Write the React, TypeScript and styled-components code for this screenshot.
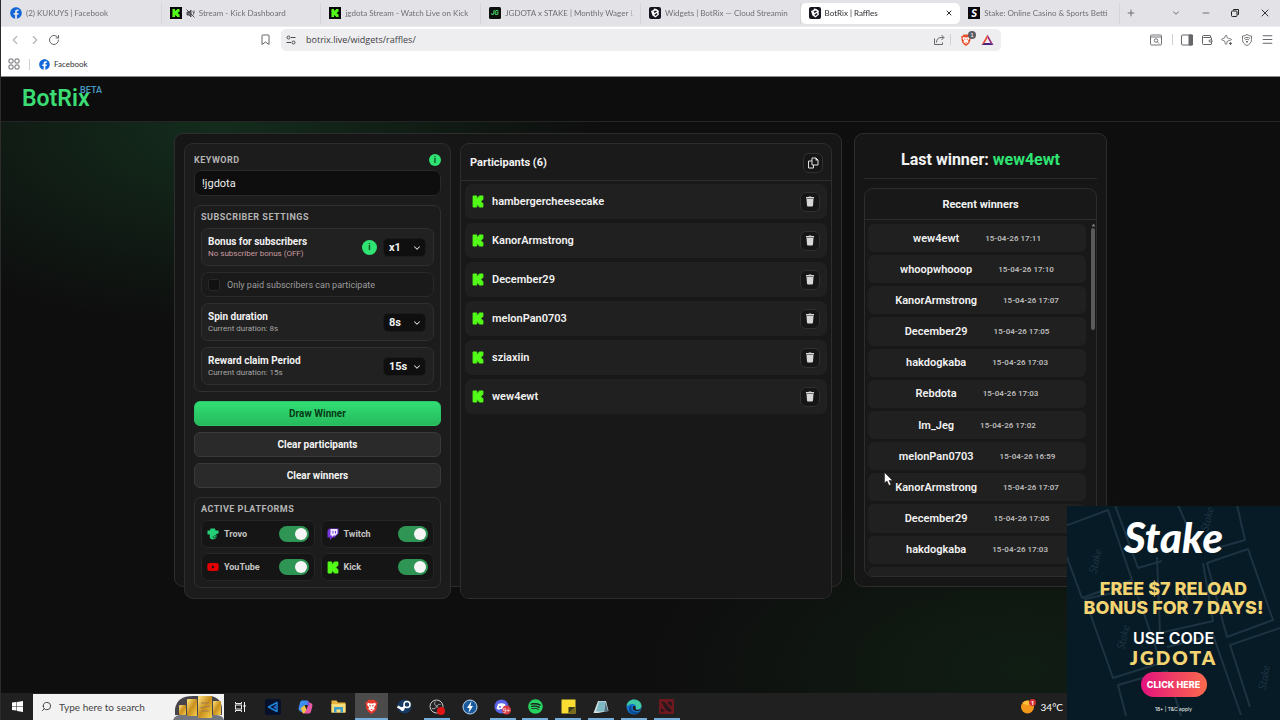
import React from "react";
import styled, { createGlobalStyle, css } from "styled-components";
import {
  ChevronDown,
  ChevronLeft,
  ChevronRight,
  Menu,
  Minus,
  Plus,
  RotateCw,
  Search,
  Wallet,
  X,
} from "lucide-react";
import { FaFacebook, FaSpotify, FaYoutube } from "react-icons/fa";

const roboto = `Roboto, "Liberation Sans", sans-serif`;
const systemFont = `Lato, "Open Sans", sans-serif`;

const GlobalStyle = createGlobalStyle`
  *, *::before, *::after { box-sizing: border-box; }
  body { margin: 0; background: #0d0d0d; font-family: ${roboto}; color: #f2f2f2; }
  h1, h2, h3, p, ul { margin: 0; padding: 0; }
  ul { list-style: none; }
  button, input, select { font: inherit; color: inherit; }
  button { cursor: pointer; padding: 0; border: 0; background: none; }
  svg { display: block; flex: none; }
`;

const Desktop = styled.div`
  display: flex;
  flex-direction: column;
  min-height: 100vh;
  overflow: hidden;
  border-left: 1px solid #2c2c2c;
`;

/* ---------- browser chrome ---------- */

const Chrome = styled.header`
  font-family: ${systemFont};
  font-size: 8px;
  line-height: 12px;
  color: #3d3d42;
  background: #fff;
  border-bottom: 1px solid #8c8c8c;
`;

const TabStrip = styled.nav`
  display: flex;
  align-items: center;
  height: 27px;
  padding-left: 1px;
  background: #e3e3e7;
  border-bottom: 1px solid #ececef;
`;

const TabList = styled.div`
  display: flex;
  flex: 1;
  min-width: 0;
`;

const Tab = styled.a<{ $active?: boolean }>`
  display: flex;
  flex: 1 1 0;
  align-items: center;
  gap: 4px;
  min-width: 0;
  height: 21px;
  padding: 0 7px 0 8px;
  text-decoration: none;
  color: ${(p) => (p.$active ? "#2f2f34" : "#6e6e75")};
  background: ${(p) => (p.$active ? "#fff" : "transparent")};
  border-radius: ${(p) => (p.$active ? "5px" : "0")};
  box-shadow: ${(p) => (p.$active ? "none" : "inset -1px 0 0 #d5d5da")};
`;

const TabTitle = styled.span`
  flex: 1;
  min-width: 0;
  overflow: hidden;
  white-space: nowrap;
  mask-image: linear-gradient(to right, #000 calc(100% - 6px), transparent);
`;

const WindowControls = styled.div`
  display: flex;
  align-items: center;
  justify-content: space-between;
  width: 160px;
  padding: 0 9px 0 6px;
  color: #55555b;
`;

const ControlGroup = styled.div`
  display: flex;
  align-items: center;
  gap: 20px;
`;

const IconButton = styled.button`
  display: flex;
  align-items: center;
  justify-content: center;
  color: inherit;
`;

const Toolbar = styled.div`
  display: flex;
  align-items: center;
  height: 25px;
  padding: 0 6px 0 7px;
  color: #66666b;
`;

const ToolbarIcons = styled.div<{ $gap: number; $end?: boolean }>`
  display: flex;
  align-items: center;
  gap: ${(p) => p.$gap}px;
  margin-left: ${(p) => (p.$end ? "auto" : "0")};
`;

const AddressArea = styled.div`
  display: flex;
  align-items: center;
  gap: 11px;
  width: 740px;
  margin-left: 201px;
`;

const AddressBar = styled.form`
  display: flex;
  flex: 1;
  align-items: center;
  gap: 10px;
  height: 22px;
  padding: 0 7px 0 5px;
  background: #eeeef1;
  border-radius: 5px;
`;

const AddressInput = styled.input`
  flex: 1;
  min-width: 0;
  padding: 0;
  border: 0;
  outline: 0;
  background: none;
  font-family: "Open Sans", sans-serif;
  font-size: 9px;
  color: #3d3d42;
`;

const Divider = styled.span`
  width: 1px;
  height: 11px;
  background: #cfcfd4;
`;

const ShieldWrap = styled.span`
  position: relative;
`;

const ShieldCount = styled.span`
  position: absolute;
  top: -3px;
  right: -4px;
  width: 8px;
  height: 8px;
  border-radius: 4px;
  background: #5b5b63;
  color: #fff;
  font-size: 6px;
  line-height: 8px;
  text-align: center;
`;

const BookmarkBar = styled.nav`
  display: flex;
  align-items: center;
  gap: 9px;
  height: 24px;
  padding: 0 7px;
`;

const Bookmark = styled.a`
  display: flex;
  align-items: center;
  gap: 4px;
  color: #2f2f34;
  text-decoration: none;
`;

/* ---------- site ---------- */

const Site = styled.div`
  display: flex;
  flex: 1;
  flex-direction: column;
  background:
    radial-gradient(ellipse 380px 200px at 17% 8%, rgba(28, 90, 50, 0.4), transparent),
    radial-gradient(ellipse 380px 180px at 80% 96%, rgba(22, 70, 34, 0.28), transparent),
    #0e0e0e;
`;

const SiteHeader = styled.header`
  display: flex;
  align-items: center;
  height: 45px;
  padding-left: 21px;
  background: #0d0d0d;
  border-bottom: 1px solid #242424;
`;

const Brand = styled.a`
  position: relative;
  color: #3bdc73;
  font-size: 23px;
  line-height: 28px;
  font-weight: 600;
  text-decoration: none;
`;

const BetaTag = styled.sup`
  position: absolute;
  left: 58px;
  top: -1px;
  color: #4795bd;
  font-size: 9px;
  line-height: 12px;
`;

const Content = styled.main`
  display: grid;
  grid-template-columns: minmax(0, 668fr) minmax(0, 253fr);
  gap: 12px;
  width: 72%;
  min-width: 933px;
  margin: 11px auto 0;
`;

const surface = css`
  border: 1px solid #2d2d2d;
  border-radius: 9px;
`;

const RafflePanel = styled.section`
  ${surface}
  display: grid;
  grid-template-columns: 267px minmax(0, 1fr);
  gap: 9px;
  padding: 9px 9px 0;
  background: #161616;
`;

const Column = styled.div`
  ${surface}
  display: flex;
  flex-direction: column;
  margin-bottom: -13px;
  background: #1a1a1a;
`;

const ControlsColumn = styled(Column)`
  gap: 9px;
  padding: 9px 9px 10px;
  background: #1c1c1c;
`;

const Field = styled.div`
  display: flex;
  flex-direction: column;
  gap: 4px;
`;

const FieldHead = styled.div`
  display: flex;
  align-items: center;
  justify-content: space-between;
  height: 13px;
`;

const capsLabel = css`
  color: #b4b4b4;
  font-size: 9px;
  line-height: 12px;
  font-weight: 700;
  letter-spacing: 0.5px;
  text-transform: uppercase;
`;

const CapsLabel = styled.label`
  ${capsLabel}
`;

const InfoDot = styled.button<{ $size: number }>`
  width: ${(p) => p.$size}px;
  height: ${(p) => p.$size}px;
  border-radius: 50%;
  background: #2fe472;
  color: #0c4a22;
  font-size: 9px;
  line-height: ${(p) => p.$size}px;
  font-weight: 700;
  text-align: center;
`;

const KeywordInput = styled.input`
  width: 100%;
  height: 26px;
  padding: 0 7px;
  border: 1px solid #292929;
  border-radius: 7px;
  outline: 0;
  background: #0e0e0e;
  color: #ededed;
  font-size: 11px;
`;

const Group = styled.section`
  display: flex;
  flex-direction: column;
  gap: 5px;
  padding: 5px 6px 6px;
  border: 1px solid #303030;
  border-radius: 7px;
`;

const GroupTitle = styled.h2`
  ${capsLabel}
`;

const Settings = styled.div`
  display: flex;
  flex-direction: column;
  gap: 6px;
`;

const SettingRow = styled.div`
  display: flex;
  align-items: center;
  gap: 6px;
  height: 38px;
  padding: 0 7px 0 6px;
  border: 1px solid #2f2f2f;
  border-radius: 7px;
  background: #212121;
`;

const SettingText = styled.div`
  flex: 1;
`;

const SettingName = styled.label`
  display: block;
  font-size: 10px;
  line-height: 13px;
  font-weight: 700;
`;

const SettingHint = styled.p<{ $off?: boolean }>`
  font-size: 8px;
  line-height: 12px;
  color: ${(p) => (p.$off ? "#c79a9f" : "#a6a6a6")};
`;

const SelectBox = styled.span`
  position: relative;
  width: 43px;
  height: 19px;

  svg {
    position: absolute;
    top: 5px;
    right: 4px;
    pointer-events: none;
  }
`;

const Select = styled.select`
  display: block;
  appearance: none;
  width: 100%;
  height: 100%;
  padding: 0 0 0 5px;
  border: 1px solid #1b1b1b;
  border-radius: 5px;
  background: #0f0f0f;
  font-size: 11px;
  font-weight: 700;
`;

const CheckRow = styled.label`
  display: flex;
  align-items: center;
  gap: 7px;
  height: 25px;
  padding: 0 6px;
  border: 1px solid #2a2a2a;
  border-radius: 7px;
  background: #1a1a1a;
  color: #9c9c9c;
  font-size: 9px;
`;

const CheckBox = styled.input`
  appearance: none;
  width: 12px;
  height: 12px;
  margin: 0;
  border: 1px solid #272727;
  border-radius: 3px;
  background: #111;
`;

const Actions = styled.div`
  display: flex;
  flex-direction: column;
  gap: 6px;
`;

const ActionButton = styled.button<{ $primary?: boolean }>`
  height: 25px;
  border: 1px solid ${(p) => (p.$primary ? "#2bc666" : "#3a3a3a")};
  border-radius: 6px;
  background: ${(p) => (p.$primary ? "linear-gradient(#31df75, #26b95c)" : "#2a2a2a")};
  color: ${(p) => (p.$primary ? "#063a17" : "#f4f4f4")};
  font-size: 10px;
  font-weight: 700;
`;

const PlatformGrid = styled.div`
  display: grid;
  grid-template-columns: 1fr 1fr;
  gap: 5px 6px;
`;

const PlatformTile = styled.label`
  display: flex;
  align-items: center;
  gap: 5px;
  height: 28px;
  padding: 0 5px;
  border: 1px solid #262626;
  border-radius: 7px;
  background: #151515;
  color: #c4c4c4;
  font-size: 9px;
  font-weight: 700;
`;

const Toggle = styled.input`
  appearance: none;
  display: flex;
  align-items: center;
  justify-content: flex-end;
  width: 30px;
  height: 16px;
  margin: 0 0 0 auto;
  padding: 0 2px;
  border-radius: 8px;
  background: #2f9554;

  &::after {
    content: "";
    width: 12px;
    height: 12px;
    border-radius: 50%;
    background: #f4f4f4;
  }
  &:not(:checked) {
    justify-content: flex-start;
    background: #444;
  }
`;

const ListHead = styled.header`
  display: flex;
  align-items: center;
  justify-content: space-between;
  height: 37px;
  padding: 1px 8px 0 9px;
  border-bottom: 1px solid #2d2d2d;
`;

const ListTitle = styled.h2`
  font-size: 11px;
  line-height: 14px;
  font-weight: 700;
`;

const SquareButton = styled(IconButton)`
  width: 20px;
  height: 20px;
  border: 1px solid #303030;
  border-radius: 6px;
  background: #161616;
  color: #e0e0e0;
`;

const ParticipantList = styled.ul`
  display: flex;
  flex: 1;
  flex-direction: column;
  gap: 4px;
  padding: 3px 4px;
  border-radius: 0 0 8px 8px;
  background: #181818;
`;

const Participant = styled.li`
  display: flex;
  align-items: center;
  gap: 8px;
  height: 35px;
  padding: 0 7px;
  border-radius: 7px;
  background: #202020;
  font-size: 11px;
  font-weight: 600;
`;

const ParticipantName = styled.span`
  flex: 1;
`;

const WinnersPanel = styled.aside`
  ${surface}
  display: flex;
  flex-direction: column;
  gap: 9px;
  padding: 9px;
  background: #161616;
`;

const LastWinner = styled.h1`
  height: 36px;
  padding-top: 7px;
  border-bottom: 1px solid #2a2a2a;
  font-size: 16px;
  line-height: 20px;
  font-weight: 700;
  text-align: center;

  span { color: #2fe472; }
`;

const RecentCard = styled.section`
  ${surface}
  display: flex;
  flex: 1 1 0;
  flex-direction: column;
  min-height: 0;
  background: #181818;
`;

const RecentTitle = styled.h2`
  height: 31px;
  border-bottom: 1px solid #2d2d2d;
  font-size: 11px;
  line-height: 31px;
  font-weight: 700;
  text-align: center;
`;

const RecentBody = styled.div`
  display: flex;
  flex: 1 1 0;
  min-height: 0;
`;

const WinnerList = styled.ul`
  display: grid;
  flex: 1;
  grid-auto-rows: 8%;
  gap: 3px;
  height: 100%;
  padding: 4px 4px 0 3px;
  overflow: hidden;
`;

const Winner = styled.li`
  display: flex;
  align-items: center;
  justify-content: center;
  gap: 26px;
  border-radius: 6px;
  background: #202020;
  font-size: 11px;
  font-weight: 600;

  time {
    color: #bcbcbc;
    font-size: 8px;
  }
`;

const ScrollTrack = styled.div`
  display: flex;
  flex-direction: column;
  align-items: center;
  gap: 1px;
  width: 6px;
  padding-top: 3px;
`;

const ScrollThumb = styled.div`
  width: 4px;
  height: 29%;
  border-radius: 2px;
  background: #5a5a5a;
`;

/* ---------- advertisement ---------- */

const Ad = styled.aside`
  position: fixed;
  right: 0;
  bottom: 0;
  width: 213px;
  height: 214px;
  overflow: hidden;
  background: #071b27;
  font-family: Inter, "Liberation Sans", sans-serif;
  text-align: center;
`;

const AdArt = styled.svg`
  position: absolute;
  inset: 0;
`;

const AdBody = styled.div`
  position: relative;
  display: flex;
  flex-direction: column;
  align-items: center;
`;

const AdLogo = styled.p`
  height: 73px;
  font-family: Lato, sans-serif;
  font-size: 42px;
  line-height: 62px;
  font-style: italic;
  font-weight: 900;
  color: #fff;
`;

const AdLine = styled.p<{ $gold?: boolean }>`
  color: ${(p) => (p.$gold ? "#f3d471" : "#fff")};
  font-size: ${(p) => (p.$gold ? 18 : 16)}px;
  line-height: 19px;
  font-weight: ${(p) => (p.$gold ? 800 : 600)};
  white-space: nowrap;
`;

const AdCode = styled(AdLine)`
  font-family: Lato, sans-serif;
  font-size: 19px;
  letter-spacing: 2px;
`;

const AdOffer = styled.div`
  margin-top: 12px;
`;

const AdButton = styled.a`
  width: 66px;
  height: 25px;
  margin-top: 5px;
  border-radius: 13px;
  background: linear-gradient(to right, #e3127d, #fa6a4c);
  color: #fff;
  font-size: 9px;
  line-height: 25px;
  font-weight: 800;
  text-decoration: none;
`;

const AdTerms = styled.small`
  margin-top: 6px;
  font-size: 5px;
  line-height: 12px;
`;

/* ---------- taskbar ---------- */

const Taskbar = styled.footer`
  display: flex;
  align-items: center;
  height: 27px;
  background: #202021;
  font-family: ${systemFont};
`;

const StartButton = styled(IconButton)`
  width: 32px;
  height: 27px;
`;

const SearchBox = styled.label`
  display: flex;
  align-items: center;
  gap: 7px;
  width: 191px;
  height: 26px;
  padding: 0 0 0 8px;
  background: #f2f2f2;
  color: #3a3a3a;

  input {
    flex: 1;
    min-width: 0;
    padding: 0;
    border: 0;
    outline: 0;
    background: none;
    font-size: 10px;
  }
  input::placeholder { color: #444; opacity: 1; }
`;

const MirroredSearch = styled(Search)`
  transform: scaleX(-1);
`;

const TaskList = styled.div`
  display: flex;
  width: 459px;
`;

const TaskButton = styled(IconButton)<{ $open?: boolean; $focused?: boolean }>`
  flex: 1 1 0;
  height: 27px;
  background-color: ${(p) => (p.$focused ? "#4b4b4c" : "transparent")};
  background-image: ${(p) => (p.$open ? "linear-gradient(#76aedb, #76aedb)" : "none")};
  background-repeat: no-repeat;
  background-position: center bottom;
  background-size: ${(p) => (p.$focused ? "100%" : "26px")} 2px;
`;

const Weather = styled.div`
  display: flex;
  align-items: center;
  gap: 5px;
  margin-left: auto;
  margin-right: 217px;
  font-size: 10px;
  color: #fff;
`;

const Pointer = styled.svg`
  position: fixed;
  left: 884px;
  top: 472px;
`;

/* ---------- drawings ---------- */

const KICK =
  "M1.333 0h8v5.333H12V2.667h2.667V0h8v8H20v2.667h-2.667v2.666H20V16h2.667v8h-8v-2.667H12v-2.666H9.333V24h-8Z";

const KickMark = () => (
  <svg width="12" height="13" viewBox="-1 -1 26 26" fill="#53fc18" stroke="#53fc18" strokeWidth="2" strokeLinejoin="round">
    <path d={KICK} />
  </svg>
);

const KickFavicon = () => (
  <svg width="12" height="12" viewBox="0 0 36 36">
    <rect width="36" height="36" fill="#050505" />
    <path d={KICK} transform="translate(6 6)" fill="#53fc18" />
  </svg>
);

const JgFavicon = () => (
  <svg width="12" height="12" viewBox="0 0 24 24">
    <rect width="24" height="24" rx="3" fill="#0c100d" />
    <text x="12" y="16" textAnchor="middle" fontFamily="Inter" fontWeight="800" fontStyle="italic" fontSize="11" fill="#47d66a">JG</text>
  </svg>
);

const BotrixFavicon = () => (
  <svg width="12" height="12" viewBox="0 0 24 24">
    <rect width="24" height="24" rx="4" fill="#15151f" />
    <path d="M4 8 9 6l1-3 5 1 5 4-1 3 1 4-7 6-6-4Z" fill="#fff" />
    <path d="m9 9 5-2 2 2-5 3Zm2 6 5-3 1 3-5 3Z" fill="#15151f" />
  </svg>
);

const StakeFavicon = () => (
  <svg width="12" height="12" viewBox="0 0 24 24">
    <rect width="24" height="24" fill="#07090c" />
    <text x="12" y="20" textAnchor="middle" fontFamily="Lato" fontWeight="900" fontStyle="italic" fontSize="22" fill="#fff">S</text>
  </svg>
);

const MutedIcon = () => (
  <svg width="9" height="9" viewBox="0 0 18 18" fill="none" stroke="#333338" strokeWidth="1.6">
    <path d="M2 6h4l4-4v14l-4-4H2Z" fill="#77777c" /><path d="m1 1 16 16M13 5c3 2 3 6 0 8M16 3v5" />
  </svg>
);

const TuneIcon = () => (
  <svg width="10" height="10" viewBox="0 0 20 20" fill="none" stroke="#4b4b50" strokeWidth="2">
    <circle cx="5" cy="5" r="3" /><path d="M10 5h9M1 15h9" /><circle cx="15" cy="15" r="3" />
  </svg>
);

const ShareIcon = () => (
  <svg width="12" height="12" viewBox="0 0 24 24" fill="none" stroke="#66666b" strokeWidth="2">
    <path d="M3 9v12h16v-4M7 17c0-7 4-10 9-10h5M17 2l5 5-5 5" />
  </svg>
);

const BraveIcon = ({ size, color = "#e8502b" }: { size: number; color?: string }) => (
  <svg width={size} height={size} viewBox="0 0 24 24">
    <path d="M7 1h10l2 3 3 1-1 4c0 8-3 11-9 15C6 20 3 17 3 9L2 5l3-1Z" fill={color} />
    <path d="m6 6 4 1h4l4-1 1 3-3 4 1 3-5 4-5-4 1-3-3-4Z" fill="#fff" />
    <path d="m8 9 3 1-1 3Zm8 0-3 1 1 3Zm-6 7h4l-2 2Z" fill={color} />
  </svg>
);

const BatIcon = () => (
  <svg width="13" height="12" viewBox="0 0 26 24">
    <path d="M13 1 1 22l6-4 6-10Z" fill="#e8492c" />
    <path d="m13 1 12 21-6-4-6-10Z" fill="#a0287f" />
    <path d="M1 22h24l-6-4H7Z" fill="#4a217c" />
  </svg>
);

const TabSearchIcon = () => (
  <svg width="12" height="12" viewBox="0 0 24 24" fill="none" stroke="#66666b" strokeWidth="1.8">
    <rect x="1" y="2" width="22" height="20" rx="2" /><path d="M1 6h22" /><circle cx="12" cy="13" r="3.5" /><path d="m15 16 3 3" />
  </svg>
);

const SidebarIcon = () => (
  <svg width="12" height="12" viewBox="0 0 24 24" fill="none" stroke="#66666b" strokeWidth="2">
    <rect x="1" y="2" width="22" height="20" rx="2" /><path d="M16 2h7v20h-7Z" fill="#66666b" />
  </svg>
);

const LeoIcon = () => (
  <svg width="12" height="12" viewBox="0 0 24 24" fill="none" stroke="#66666b" strokeWidth="1.8">
    <path d="M10 2c2 1 2 5 3 6s6 1 8 3c-2 3-7 2-8 3s-1 6-3 7c-2-1-2-6-3-7s-5-1-6-3c1-2 5-2 6-3s1-5 3-6Z" />
    <path d="M19 16v6M16 19h6" strokeWidth="2.4" />
  </svg>
);

const VpnIcon = () => (
  <svg width="12" height="12" viewBox="0 0 24 24" fill="none" stroke="#66666b" strokeWidth="1.8">
    <path d="M12 1c3 2 6 3 9 3v7c0 6-4 10-9 12-5-2-9-6-9-12V4c3 0 6-1 9-3Z" />
    <path d="M6 9c4-3 8-3 12 0M8 12c3-2 5-2 8 0M12 14v4M10 15h4" />
  </svg>
);

const AppsIcon = () => (
  <svg width="12" height="12" viewBox="0 0 24 24" fill="none" stroke="#66666b" strokeWidth="2">
    <rect x="2" y="2" width="8" height="8" rx="2" /><rect x="14" y="2" width="8" height="8" rx="2" />
    <rect x="2" y="14" width="8" height="8" rx="2" /><rect x="14" y="14" width="8" height="8" rx="2" />
  </svg>
);

const BookmarkIcon = () => (
  <svg width="9" height="12" viewBox="0 0 18 24" fill="none" stroke="#66666b" strokeWidth="2">
    <path d="M2 3q0-1 1-1h12q1 0 1 1v18l-7-5-7 5Z" />
  </svg>
);

const RestoreIcon = () => (
  <svg width="8" height="8" viewBox="0 0 16 16" fill="none" stroke="#222" strokeWidth="2">
    <rect x="1" y="4" width="11" height="11" rx="2" /><path d="M5 3V1h10v10h-2" />
  </svg>
);

const CopyIcon = () => (
  <svg width="12" height="12" viewBox="0 0 24 24" fill="none" stroke="currentColor" strokeWidth="2">
    <path d="M10 2h8l4 4v10H10Z" /><path d="M17 1v6h6Z" fill="currentColor" stroke="none" />
    <path d="M10 8H3v14h10v-6" />
  </svg>
);

const TrashIcon = () => (
  <svg width="10" height="12" viewBox="0 0 20 24" fill="#d8d8d8">
    <path d="M2 2h5l1-1h4l1 1h5v3H2ZM3 6h14l-1 13q0 2-2 2H6q-2 0-2-2Z" />
  </svg>
);

const TrovoIcon = () => (
  <svg width="12" height="12" viewBox="0 0 24 24">
    <path d="M7 1h9l1 4h6v6l-5 1c3 5 0 11-6 11-7 0-7-6-6-10H1V5h5Z" fill="#25cf78" />
    <path d="M15 15c3-1 4 3 1 5-3 1-5-2-3-4" fill="none" stroke="#0f4a2c" strokeWidth="2" />
  </svg>
);

const TwitchIcon = () => (
  <svg width="12" height="12" viewBox="0 0 24 24">
    <path d="M5 1 1 5v14h5v5l5-5h4l8-8V1Z" fill="#7537dc" />
    <path d="M7 2h14v9l-4 4h-4l-3 3v-3H7Z" fill="#efe9fa" /><path d="M12 6v5M17 6v5" stroke="#7537dc" strokeWidth="2" />
  </svg>
);

const WindowsIcon = () => (
  <svg width="11" height="11" viewBox="0 0 22 22" fill="#fff">
    <path d="m0 3 9-1v8H0Zm10-1 12-2v10H10ZM0 11h9v8l-9-1Zm10 0h12v11l-12-2Z" />
  </svg>
);

const GoldArt = () => (
  <svg width="51" height="26" viewBox="0 0 51 26">
    <defs>
      <linearGradient id="gold" x1="0" y1="0" x2="1" y2="1">
        <stop offset="0" stopColor="#ffe680" /><stop offset="0.5" stopColor="#c98f1d" /><stop offset="1" stopColor="#f7d14f" />
      </linearGradient>
    </defs>
    <path d="M2 15Q4 2 20 2h18q11 2 11 14v5H2Z" fill="#47434a" />
    <path d="M0 26q2-6 12-5h30q8 0 9 5Z" fill="#72767f" />
    <rect x="6" y="11" width="7" height="10" rx="1" fill="url(#gold)" />
    <rect x="14" y="5" width="10" height="17" rx="1" fill="url(#gold)" />
    <rect x="40" y="7" width="8" height="14" rx="1" fill="url(#gold)" />
    <rect x="25" y="2" width="14" height="22" rx="1" fill="url(#gold)" />
    <path d="M28 9h8M27 14l10-2M28 17h8" stroke="#a67a50" />
  </svg>
);

const TaskViewIcon = () => (
  <svg width="12" height="12" viewBox="0 0 24 24" fill="none" stroke="#eee" strokeWidth="2">
    <path d="M3 2v3h12V2M3 22v-3h12v3M21 2v20" /><rect x="3" y="8" width="12" height="8" /><path d="M19 10h4" strokeWidth="4" />
  </svg>
);

const TriangleAppIcon = () => (
  <svg width="16" height="16" viewBox="0 0 32 32">
    <rect width="32" height="32" rx="4" fill="#06102a" />
    <path d="M24 7 7 16l17 9Z" fill="none" stroke="#1f86d8" strokeWidth="3" strokeLinejoin="round" />
    <path d="M22 12v9l-6-5Z" fill="#2b57c9" />
  </svg>
);

const CopilotIcon = () => (
  <svg width="15" height="14" viewBox="0 0 30 28">
    <path d="M8 1h10q3 0 4 4l2 5H12L8 24Q1 22 1 17L4 5Q5 1 8 1Z" fill="#3b8ff0" />
    <path d="M22 27H12q-3 0-4-4l-1-4h10l5-14q7 1 7 6l-3 12q-1 4-4 4Z" fill="#e95aa4" />
    <path d="m13 10 4 9-5 8q-3 0-4-4L7 19l-3-1Z" fill="#f0c447" />
    <path d="m18 1 4 4 2 7-5-1Z" fill="#8756d8" />
  </svg>
);

const FolderIcon = () => (
  <svg width="15" height="13" viewBox="0 0 30 26">
    <path d="M1 1h10l3 4h15v20H1Z" fill="#e6b33e" /><path d="M1 8h28v17H1Z" fill="#f9dc7b" />
    <path d="M6 14h18v11h-5v-6h-8v6H6Z" fill="#3c9fc9" />
  </svg>
);

const SteamIcon = () => (
  <svg width="15" height="15" viewBox="0 0 30 30">
    <circle cx="15" cy="15" r="14" fill="#153a63" />
    <path d="m1 15 10 5 5-6" stroke="#fff" strokeWidth="5" fill="none" />
    <circle cx="20" cy="11" r="6" fill="#153a63" stroke="#fff" strokeWidth="3" /><circle cx="11" cy="20" r="4" fill="#fff" />
  </svg>
);

const ObsIcon = () => (
  <svg width="16" height="16" viewBox="0 0 32 32">
    <circle cx="15" cy="15" r="13" fill="#242427" stroke="#c9c9c9" strokeWidth="2" />
    <path d="M13 5c-4 4-1 9 4 9M6 19c5 2 9-1 9-5m8-3c-5-1-8 2-6 6" stroke="#a9a9a9" strokeWidth="2" fill="none" />
    <circle cx="24" cy="24" r="8" fill="#e11515" />
  </svg>
);

const BoltAppIcon = () => (
  <svg width="16" height="16" viewBox="0 0 32 32">
    <circle cx="16" cy="16" r="14" fill="#185a9d" stroke="#bcd8ef" strokeWidth="2" />
    <path d="m19 4-9 14h5l-2 10 9-14h-5Z" fill="#fff" />
  </svg>
);

const DiscordIcon = () => (
  <svg width="17" height="16" viewBox="0 0 34 32">
    <circle cx="15" cy="15" r="14" fill="#5a63e6" />
    <path d="M8 10q7-3 14 0l3 9-5 3-2-2h-6l-2 2-5-3Z" fill="#fff" /><circle cx="12" cy="16" r="2" fill="#5a63e6" />
    <circle cx="25" cy="22" r="9" fill="#d83c46" />
    <text x="25" y="27" textAnchor="middle" fontFamily="Open Sans" fontSize="13" fill="#fff">9+</text>
  </svg>
);

const StickyIcon = () => (
  <svg width="15" height="15" viewBox="0 0 30 30">
    <path d="M1 1h28v28H1Z" fill="#fbdc32" /><path d="M15 29V16h14Z" fill="#3d3a1d" /><path d="M15 29 29 16v13Z" fill="#77691d" />
  </svg>
);

const NotepadIcon = () => (
  <svg width="16" height="14" viewBox="0 0 32 28">
    <path d="M10 2h16l5 20-21 4H1Z" fill="#d8e3e6" /><path d="M12 3h13l-4 20H6Z" fill="#7db9c3" /><path d="m25 4 5 18-8 2Z" fill="#4d7180" />
  </svg>
);

const EdgeIcon = () => (
  <svg width="16" height="16" viewBox="0 0 32 32">
    <circle cx="16" cy="16" r="15" fill="#1473c8" />
    <path d="M1 15C2 5 9 1 16 1c9 0 15 6 15 13 0 6-7 9-12 6 4-7-3-11-8-10C6 11 3 13 1 15Z" fill="#3fc8a4" />
    <path d="M12 13c-4 7 1 14 10 13 3 0 5-1 6-2-5 9-20 8-22-2-1-5 2-8 6-9Z" fill="#0b4c94" />
    <path d="M15 14c4-1 5 2 4 6 3 3 8 2 11-1-1 4-4 5-8 5-7 0-11-5-7-10Z" fill="#202021" />
  </svg>
);

const DotaIcon = () => (
  <svg width="15" height="15" viewBox="0 0 30 30">
    <rect width="30" height="30" rx="2" fill="#6e1820" />
    <path d="m4 4 8 3 14 17-5 2-7-4Zm16 0 6 3-1 8-7-6ZM4 18l8 6-8 2Z" fill="#28171a" />
  </svg>
);

const WeatherIcon = () => (
  <svg width="15" height="15" viewBox="0 0 30 30">
    <circle cx="13" cy="16" r="13" fill="#f0971c" /><path d="M3 8q10 7 22 3a13 13 0 0 0-22-3Z" fill="#f9bf3a" />
    <circle cx="23" cy="7" r="7" fill="#d42f31" />
    <text x="23" y="11" textAnchor="middle" fontFamily="Open Sans" fontWeight="700" fontSize="11" fill="#fff">1</text>
  </svg>
);

/* ---------- data ---------- */

const tabs = [
  { title: "(2) KUKUYS | Facebook", icon: <FaFacebook size={12} color="#1467d8" /> },
  { title: "Stream - Kick Dashboard", icon: <KickFavicon />, muted: true },
  { title: "jgdota Stream - Watch Live on Kick", icon: <KickFavicon /> },
  { title: "JGDOTA x STAKE | Monthly Wager L", icon: <JgFavicon /> },
  { title: "Widgets | BotRix — Cloud Streamin", icon: <BotrixFavicon /> },
  { title: "BotRix | Raffles", icon: <BotrixFavicon />, active: true },
  { title: "Stake: Online Casino & Sports Betti", icon: <StakeFavicon /> },
];

const participants = ["hambergercheesecake", "KanorArmstrong", "December29", "melonPan0703", "sziaxiin", "wew4ewt"];

const winners = [
  ["wew4ewt", "15-04-26 17:11"],
  ["whoopwhooop", "15-04-26 17:10"],
  ["KanorArmstrong", "15-04-26 17:07"],
  ["December29", "15-04-26 17:05"],
  ["hakdogkaba", "15-04-26 17:03"],
  ["Rebdota", "15-04-26 17:03"],
  ["Im_Jeg", "15-04-26 17:02"],
  ["melonPan0703", "15-04-26 16:59"],
  ["KanorArmstrong", "15-04-26 17:07"],
  ["December29", "15-04-26 17:05"],
  ["hakdogkaba", "15-04-26 17:03"],
  ["", ""],
];

const platforms = [
  { name: "Trovo", icon: <TrovoIcon /> },
  { name: "Twitch", icon: <TwitchIcon /> },
  { name: "YouTube", icon: <FaYoutube size={12} color="#e60000" /> },
  { name: "Kick", icon: <KickMark /> },
];

const tasks = [
  { name: "Task view", icon: <TaskViewIcon /> },
  { name: "Editor", icon: <TriangleAppIcon /> },
  { name: "Copilot", icon: <CopilotIcon /> },
  { name: "File Explorer", icon: <FolderIcon /> },
  { name: "Brave", icon: <BraveIcon size={15} color="#e5382c" />, open: true, focused: true },
  { name: "Steam", icon: <SteamIcon /> },
  { name: "OBS", icon: <ObsIcon />, open: true },
  { name: "Bolt", icon: <BoltAppIcon /> },
  { name: "Discord", icon: <DiscordIcon />, open: true },
  { name: "Spotify", icon: <FaSpotify size={15} color="#27d35f" />, open: true },
  { name: "Sticky Notes", icon: <StickyIcon />, open: true },
  { name: "Notepad", icon: <NotepadIcon />, open: true },
  { name: "Edge", icon: <EdgeIcon />, open: true },
  { name: "Dota 2", icon: <DotaIcon />, open: true },
];

function DurationRow({ id, name, hint, off, value, info }: {
  id: string; name: string; hint: string; off?: boolean; value: string; info?: boolean;
}) {
  return (
    <SettingRow>
      <SettingText>
        <SettingName htmlFor={id}>{name}</SettingName>
        <SettingHint $off={off}>{hint}</SettingHint>
      </SettingText>
      {info && <InfoDot $size={15} type="button" aria-label="About subscriber bonus">i</InfoDot>}
      <SelectBox>
        <Select id={id} defaultValue={value}><option>{value}</option></Select>
        <ChevronDown size={10} color="#ddd" strokeWidth={2.5} />
      </SelectBox>
    </SettingRow>
  );
}

function BrowserChrome() {
  return (
    <Chrome>
      <TabStrip aria-label="Tabs">
        <TabList>
          {tabs.map((t) => (
            <Tab key={t.title} href="#" $active={t.active}>
              {t.icon}
              {t.muted && <MutedIcon />}
              <TabTitle>{t.title}</TabTitle>
              {t.active && <X size={8} strokeWidth={3} />}
            </Tab>
          ))}
        </TabList>
        <WindowControls>
          <IconButton aria-label="New tab"><Plus size={10} /></IconButton>
          <ControlGroup>
            <IconButton aria-label="Search tabs"><ChevronDown size={10} /></IconButton>
            <IconButton aria-label="Minimize"><Minus size={10} /></IconButton>
            <IconButton aria-label="Restore"><RestoreIcon /></IconButton>
            <IconButton aria-label="Close"><X size={12} color="#333" /></IconButton>
          </ControlGroup>
        </WindowControls>
      </TabStrip>
      <Toolbar>
        <ToolbarIcons $gap={6}>
          <IconButton aria-label="Back"><ChevronLeft size={14} color="#b5b5b9" /></IconButton>
          <IconButton aria-label="Forward"><ChevronRight size={14} color="#b5b5b9" /></IconButton>
          <IconButton aria-label="Reload"><RotateCw size={12} /></IconButton>
        </ToolbarIcons>
        <AddressArea>
          <IconButton aria-label="Bookmark this page"><BookmarkIcon /></IconButton>
          <AddressBar>
            <TuneIcon />
            <AddressInput aria-label="Address" defaultValue="botrix.live/widgets/raffles/" />
            <ToolbarIcons $gap={9}>
              <ToolbarIcons $gap={5}><ShareIcon /><Divider /></ToolbarIcons>
              <ShieldWrap><BraveIcon size={12} /><ShieldCount>1</ShieldCount></ShieldWrap>
              <BatIcon />
            </ToolbarIcons>
          </AddressBar>
        </AddressArea>
        <ToolbarIcons $gap={8} $end>
          <ToolbarIcons $gap={10}><TabSearchIcon /><Divider /></ToolbarIcons>
          <SidebarIcon />
          <Wallet size={12} />
          <LeoIcon />
          <VpnIcon />
          <Menu size={13} />
        </ToolbarIcons>
      </Toolbar>
      <BookmarkBar aria-label="Bookmarks">
        <AppsIcon />
        <Divider />
        <Bookmark href="#"><FaFacebook size={11} color="#1467d8" />Facebook</Bookmark>
      </BookmarkBar>
    </Chrome>
  );
}

const cardLabels = [
  [32, 56, -76],
  [60, 132, -76],
  [144, 14, -76],
  [121, 92, -68],
  [201, 172, -80],
];

function StakeAd() {
  return (
    <Ad>
      <AdArt width="213" height="214" viewBox="0 0 213 214" fill="none" stroke="#1c3341" strokeWidth="2" strokeLinejoin="round">
        <path d="M-2 20 41 4l24 70-50 18L-2 46" />
        <path d="m48-1 23 63 24-7M111-1l10 23M170-1l8 35-28 8" />
        <path d="m18 93 50-11 26 75-48 15Z" />
        <path d="m140 57 41-14 25 71-46 17Z" />
        <path d="m90 51 3 76 53-12-10-58" />
        <path d="m216 121-53 18 20 62M100 141l46-12 28 80M59 210l-8-31 49-14 14 45" />
        <g fill="#1c3341" stroke="none" fontFamily="Lato" fontStyle="italic" fontSize="11" textAnchor="middle" aria-hidden="true">
          {cardLabels.map(([x, y, angle]) => (
            <text key={`${x}-${y}`} transform={`translate(${x} ${y}) rotate(${angle})`}>Stake</text>
          ))}
        </g>
      </AdArt>
      <AdBody>
        <AdLogo>Stake</AdLogo>
        <AdLine $gold>FREE $7 RELOAD</AdLine>
        <AdLine $gold>BONUS FOR 7 DAYS!</AdLine>
        <AdOffer>
          <AdLine>USE CODE</AdLine>
          <AdCode $gold>JGDOTA</AdCode>
        </AdOffer>
        <AdButton href="#">CLICK HERE</AdButton>
        <AdTerms>18+ | T&amp;C apply</AdTerms>
      </AdBody>
    </Ad>
  );
}

export default function App() {
  return (
    <Desktop>
      <GlobalStyle />
      <BrowserChrome />
      <Site>
        <SiteHeader>
          <Brand href="#">BotRix<BetaTag>BETA</BetaTag></Brand>
        </SiteHeader>
        <Content>
          <RafflePanel>
            <ControlsColumn>
              <Field>
                <FieldHead>
                  <CapsLabel htmlFor="keyword">Keyword</CapsLabel>
                  <InfoDot $size={12} type="button" aria-label="About the keyword">i</InfoDot>
                </FieldHead>
                <KeywordInput id="keyword" defaultValue="!jgdota" />
              </Field>
              <Group>
                <GroupTitle>Subscriber settings</GroupTitle>
                <Settings>
                  <DurationRow id="bonus" name="Bonus for subscribers" hint="No subscriber bonus (OFF)" off value="x1" info />
                  <CheckRow><CheckBox type="checkbox" />Only paid subscribers can participate</CheckRow>
                  <DurationRow id="spin" name="Spin duration" hint="Current duration: 8s" value="8s" />
                  <DurationRow id="claim" name="Reward claim Period" hint="Current duration: 15s" value="15s" />
                </Settings>
              </Group>
              <Actions>
                <ActionButton $primary>Draw Winner</ActionButton>
                <ActionButton>Clear participants</ActionButton>
                <ActionButton>Clear winners</ActionButton>
              </Actions>
              <Group>
                <GroupTitle>Active platforms</GroupTitle>
                <PlatformGrid>
                  {platforms.map((p) => (
                    <PlatformTile key={p.name}>
                      {p.icon}
                      {p.name}
                      <Toggle type="checkbox" role="switch" defaultChecked />
                    </PlatformTile>
                  ))}
                </PlatformGrid>
              </Group>
            </ControlsColumn>
            <Column>
              <ListHead>
                <ListTitle>Participants (6)</ListTitle>
                <SquareButton aria-label="Copy participants"><CopyIcon /></SquareButton>
              </ListHead>
              <ParticipantList>
                {participants.map((name) => (
                  <Participant key={name}>
                    <KickMark />
                    <ParticipantName>{name}</ParticipantName>
                    <SquareButton aria-label={`Remove ${name}`}><TrashIcon /></SquareButton>
                  </Participant>
                ))}
              </ParticipantList>
            </Column>
          </RafflePanel>
          <WinnersPanel>
            <LastWinner>Last winner: <span>wew4ewt</span></LastWinner>
            <RecentCard>
              <RecentTitle>Recent winners</RecentTitle>
              <RecentBody>
                <WinnerList>
                  {winners.map(([name, time], i) => (
                    <Winner key={i}>{name}<time>{time}</time></Winner>
                  ))}
                </WinnerList>
                <ScrollTrack>
                  <svg width="5" height="4" viewBox="0 0 10 8" fill="#777"><path d="m5 1 4 6H1Z" /></svg>
                  <ScrollThumb />
                </ScrollTrack>
              </RecentBody>
            </RecentCard>
          </WinnersPanel>
        </Content>
      </Site>
      <Taskbar>
        <StartButton aria-label="Start"><WindowsIcon /></StartButton>
        <SearchBox>
          <MirroredSearch size={11} />
          <input aria-label="Search" placeholder="Type here to search" />
          <GoldArt />
        </SearchBox>
        <TaskList>
          {tasks.map((t) => (
            <TaskButton key={t.name} aria-label={t.name} $open={t.open} $focused={t.focused}>{t.icon}</TaskButton>
          ))}
        </TaskList>
        <Weather><WeatherIcon />34°C</Weather>
      </Taskbar>
      <StakeAd />
      <Pointer width="9" height="14" viewBox="0 0 18 28">
        <path d="M1 1v21l5-4 4 9 4-2-4-8h7Z" fill="#fff" stroke="#111" />
      </Pointer>
    </Desktop>
  );
}
